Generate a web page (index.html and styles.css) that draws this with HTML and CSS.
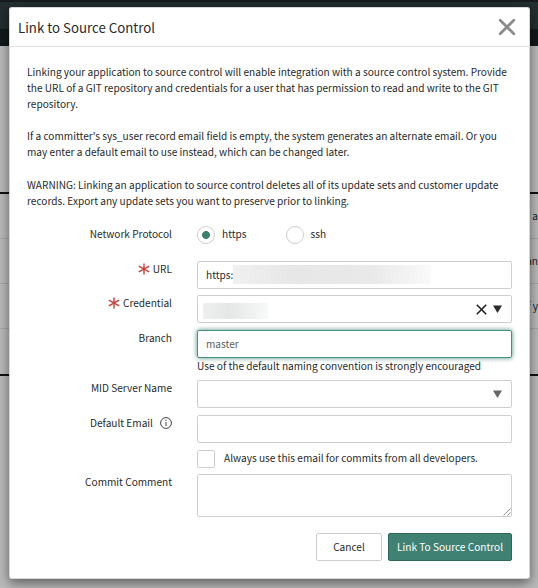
FILE: index.html
```html
<!doctype html>
<html lang="en">
    <head>
        <meta charset="UTF-8" />
        <meta name="viewport" content="width=device-width, initial-scale=1.0" />
        <title>Link to Source Control</title>
        <link rel="stylesheet" href="styles.css">
    </head>
    <body>
        <div class="page">
            <div class="topbar"></div>
            <div class="subbar"></div>
            <div class="page-table">
                <div class="page-row">r a</div>
                <div class="page-row">an</div>
                <div class="page-row">f y</div>
                <div class="page-row"></div>
            </div>
        </div>

        <div class="modal">
            <div class="modal-header">
                <h1>Link to Source Control</h1>
                <button class="close" aria-label="Close">
                    <svg width="18" height="18" viewBox="0 0 18 18">
                        <path d="M2.2 2.2 15.8 15.8M15.8 2.2 2.2 15.8" />
                    </svg>
                </button>
            </div>

            <div class="modal-body">
                <div class="intro">
                    <p>
                        Linking your application to source control will enable integration with a source control system. Provide<br />
                        the URL of a GIT repository and credentials for a user that has permission to read and write to the GIT<br />
                        repository.
                    </p>
                    <p>
                        If a committer's sys_user record email field is empty, the system generates an alternate email. Or you<br />
                        may enter a default email to use instead, which can be changed later.
                    </p>
                    <p>
                        WARNING: Linking an application to source control deletes all of its update sets and customer update<br />
                        records. Export any update sets you want to preserve prior to linking.
                    </p>
                </div>

                <form class="form">
                    <div class="row protocol">
                        <div class="label">Network Protocol</div>
                        <div class="field radios">
                            <label><input type="radio" name="protocol" checked />https</label>
                            <label><input type="radio" name="protocol" />ssh</label>
                        </div>
                    </div>
                    <div class="row">
                        <div class="label">
                            <svg class="required" width="12" height="12" viewBox="0 0 12 12">
                                <path d="M6 .5v11M.8 3.2l10.4 5.6M11.2 3.2.8 8.8" />
                            </svg>
                            URL
                        </div>
                        <div class="field">
                            <div class="input">https:<span class="redacted url"></span></div>
                        </div>
                    </div>
                    <div class="row">
                        <div class="label">
                            <svg class="required" width="12" height="12" viewBox="0 0 12 12">
                                <path d="M6 .5v11M.8 3.2l10.4 5.6M11.2 3.2.8 8.8" />
                            </svg>
                            Credential
                        </div>
                        <div class="field">
                            <div class="input select credential">
                                <span class="redacted user"></span>
                                <svg class="clear" width="11" height="11" viewBox="0 0 11 11">
                                    <path d="M.8.8l9.4 9.4M10.2.8.8 10.2" />
                                </svg>
                                <svg class="arrow" width="9" height="8" viewBox="0 0 9 8">
                                    <path d="M0 .5h9L4.5 8z" />
                                </svg>
                            </div>
                        </div>
                    </div>
                    <div class="row branch">
                        <div class="label">Branch</div>
                        <div class="field">
                            <div class="input focused">master</div>
                            <div class="hint">Use of the default naming convention is strongly encouraged</div>
                        </div>
                    </div>
                    <div class="row">
                        <div class="label">MID Server Name</div>
                        <div class="field">
                            <div class="input select">
                                <svg class="arrow muted" width="9" height="8" viewBox="0 0 9 8">
                                    <path d="M0 .5h9L4.5 8z" />
                                </svg>
                            </div>
                        </div>
                    </div>
                    <div class="row">
                        <div class="label">
                            Default Email
                            <svg class="info" width="12" height="12" viewBox="0 0 12 12">
                                <circle cx="6" cy="6" r="5.4" />
                                <path d="M6 5v4M6 2.8v1.2" />
                            </svg>
                        </div>
                        <div class="field">
                            <div class="input"></div>
                        </div>
                    </div>
                    <div class="row always">
                        <div class="label"></div>
                        <label class="field check">
                            <input type="checkbox" />Always use this email for commits from all developers.
                        </label>
                    </div>
                    <div class="row">
                        <div class="label">Commit Comment</div>
                        <div class="field">
                            <div class="input textarea">
                                <svg width="8" height="8" viewBox="0 0 8 8">
                                    <path d="M.5 7.5l7-7M4.5 7.5l3-3" />
                                </svg>
                            </div>
                        </div>
                    </div>
                </form>

                <div class="buttons">
                    <button class="btn">Cancel</button>
                    <button class="btn primary">Link To Source Control</button>
                </div>
            </div>
        </div>
    </body>
</html>
```
FILE: styles.css
```css
* {
    box-sizing: border-box;
}

body {
    margin: 0;
    height: 588px;
    overflow: hidden;
    position: relative;
    font-family: "Noto Sans CJK SC", "Open Sans", sans-serif;
    font-size: 10.1px;
    line-height: 16px;
    color: #2a2a2a;
}

/* page behind the dialog */
.page {
    height: 588px;
    background: #bababa;
}

.topbar {
    height: 29px;
    background: #232e30;
    border-top: 2px solid #151b1c;
}

.subbar {
    height: 17px;
    background: #12191b;
}

.page-table {
    margin-top: 146px;
    border-top: 2px solid #111;
    border-bottom: 2px solid #111;
}

.page-row {
    height: 45px;
    line-height: 43px;
    text-align: right;
    color: #222;
    border-bottom: 1px solid #a5a5a5;
}

.page-row:last-child {
    border-bottom: none;
}

.modal {
    position: absolute;
    top: 7px;
    left: 9px;
    width: 521px;
    height: 572px;
    padding-top: 1px;
    background: #fff;
    border-radius: 3px;
    box-shadow: inset 0 0 0 1px rgba(120, 120, 120, 0.3), 0 4px 12px rgba(0, 0, 0, 0.5);
}

.modal-header {
    display: flex;
    justify-content: space-between;
    height: 39px;
    padding: 0 14px 0 9px;
    border-bottom: 1px solid #e2e2e2;
}

.modal-header h1 {
    margin: 0;
    font-size: 13.25px;
    font-weight: 400;
    line-height: 39px;
}

.close {
    display: flex;
    align-items: center;
    padding: 0;
    border: none;
    background: none;
}

.close path {
    fill: none;
    stroke: #8c8c8c;
    stroke-width: 2.8;
    stroke-linecap: round;
}

.modal-body {
    padding: 17px 18px 0;
}

.intro p {
    margin: 0 0 17px;
    line-height: 15.8px;
    white-space: nowrap;
}

.row {
    display: flex;
    margin-bottom: 6.8px;
}

.label {
    display: flex;
    justify-content: flex-end;
    align-items: center;
    width: 145px;
    height: 16px;
    margin-right: 25px;
}

.field {
    width: 315px;
}

.protocol {
    height: 18px;
    margin-bottom: 17px;
}

.radios {
    display: flex;
}

.radios label {
    display: flex;
    width: 88.5px;
}

input {
    appearance: none;
    flex: none;
    width: 18px;
    height: 18px;
    margin: 0 7px 0 0;
    border: 1px solid #cfcfcf;
    background: #fff;
}

input[type="radio"] {
    border-radius: 50%;
}

input[type="radio"]:checked {
    background: radial-gradient(circle, #3d8071 3.6px, #fff 4.3px);
}

input[type="checkbox"] {
    border-radius: 2px;
    margin-right: 9px;
}

.required {
    margin-right: 3px;
}

.required path {
    fill: none;
    stroke: #c2423d;
    stroke-width: 1.4;
}

.info {
    margin-left: 7px;
}

.info circle,
.info path {
    fill: none;
    stroke: #444;
    stroke-width: 1;
}

.input {
    display: flex;
    align-items: center;
    height: 28px;
    padding: 0 8px;
    border: 1px solid #cfcfcf;
    border-radius: 2px;
    background: #fff;
}

.input.focused {
    color: #606060;
    border-color: #4b9080;
    box-shadow: 0 0 5px #4b9080;
}

.select {
    justify-content: flex-end;
    padding-right: 9px;
}

.credential {
    padding-left: 5px;
}

.redacted.url {
    width: 198px;
    height: 19px;
    background: linear-gradient(90deg, #f0f0f0, #e7e7e7 30%, #e9e9e9 70%, #f9f9f9);
}

.redacted.user {
    width: 65px;
    height: 16px;
    margin: 3px auto 0 0;
    background: linear-gradient(90deg, #eeefef, #e5e7e7 40%, #f7f9f8);
}

.clear {
    margin-right: 6px;
}

.clear path {
    fill: none;
    stroke: #222;
    stroke-width: 1.6;
}

.arrow path {
    fill: #2b2b2b;
}

.arrow.muted path {
    fill: #666;
}

.hint {
    height: 15px;
    line-height: 15px;
}

.always {
    margin-bottom: 6px;
}

.check {
    display: flex;
    height: 18px;
    white-space: nowrap;
}

.textarea {
    height: 43px;
    align-items: flex-end;
    justify-content: flex-end;
    padding: 0;
}

.textarea path {
    fill: none;
    stroke: #777;
    stroke-width: 0.8;
}

.buttons {
    display: flex;
    justify-content: flex-end;
    gap: 6px;
    margin-top: 16px;
}

.btn {
    width: 66px;
    height: 28px;
    padding: 0;
    border: 1px solid #cfcfcf;
    border-radius: 2px;
    background: #fff;
    color: #2a2a2a;
    font: inherit;
}

.btn.primary {
    width: 124px;
    border-color: #2f6659;
    background: #3f8172;
    color: #fff;
}
```
